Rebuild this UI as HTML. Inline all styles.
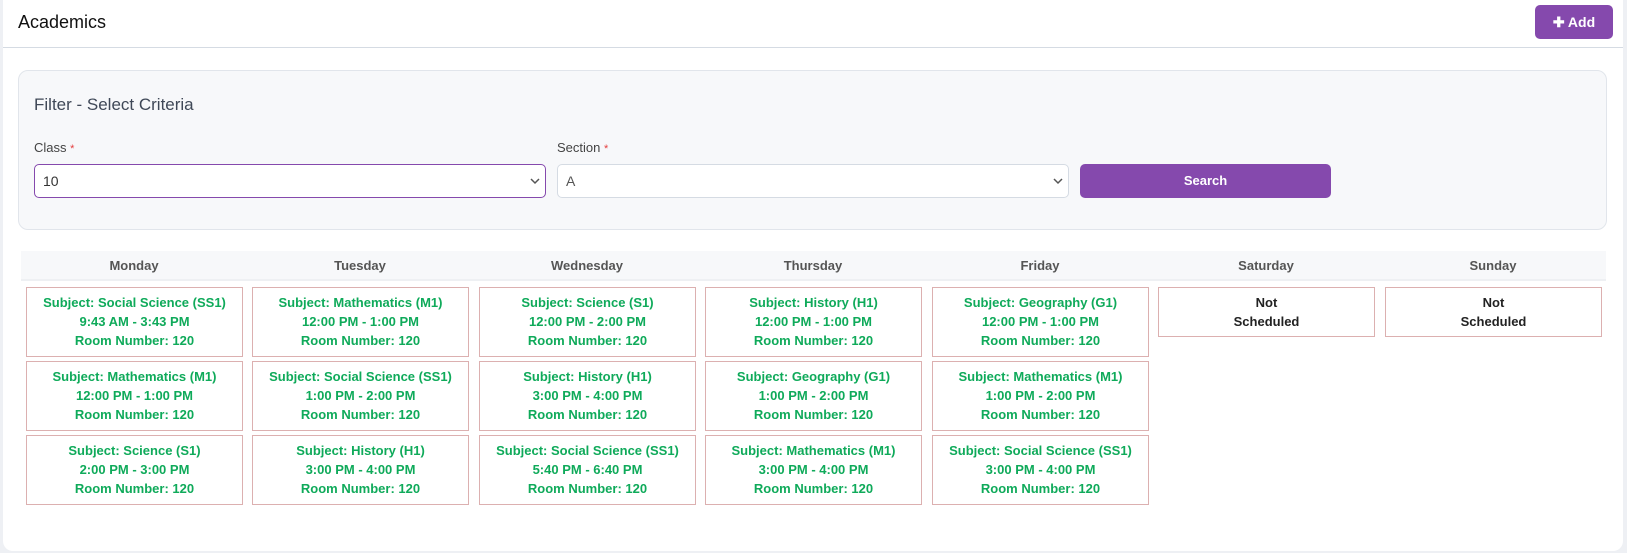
<!DOCTYPE html>
<html><head><meta charset="utf-8"><style>
*{box-sizing:border-box;margin:0;padding:0}
body{width:1627px;height:553px;background:#eef0f4;font-family:"Liberation Sans",sans-serif;position:relative;overflow:hidden}
.card{position:absolute;left:3px;top:0;width:1620px;height:551px;background:#fff;border-radius:0 0 10px 10px}
.hdr{position:absolute;left:0;top:0;width:1620px;height:48px;border-bottom:1px solid #d5dbe3}
.ttl{position:absolute;left:15px;top:12px;font-size:18px;color:#111}
.add{position:absolute;left:1532px;top:5px;width:78px;height:34px;background:#8549ad;border-radius:5px;color:#fff;font-size:14px;font-weight:bold;text-align:center;line-height:34px}
.flt{position:absolute;left:15px;top:70px;width:1589px;height:160px;background:#f7f8fa;border:1px solid #e1e5eb;border-radius:10px}
.ft{position:absolute;left:15px;top:24px;font-size:17px;color:#3f4857}
.lb{position:absolute;top:69px;font-size:13px;color:#444}
.lb b{color:#e53e3e;font-weight:normal;font-size:11px}
.sel{position:absolute;top:93px;height:34px;background:#fff;border:1px solid #d5dbe3;border-radius:5px;font-size:14px;color:#333;padding:8px 8px}
.sel svg{position:absolute;right:5px;top:13px}
.srch{position:absolute;left:1061px;top:93px;width:251px;height:34px;background:#8549ad;border-radius:5px;color:#fff;font-size:13px;font-weight:bold;text-align:center;line-height:34px}
.th{position:absolute;left:18px;top:251px;width:1585px;height:30px;background:#f7f8fa;border-bottom:2px solid #eef0f3}
.d{position:absolute;top:258px;width:226px;text-align:center;font-size:13px;font-weight:bold;color:#555}
.c{position:absolute;width:217px;height:70px;border:1px solid #dcb0b0;text-align:center;font-size:13px;font-weight:bold;line-height:19px;padding-top:5px;color:#0faa5a}
.ns{color:#222;height:50px}
</style></head><body>
<div class="card">
<div class="hdr"><div class="ttl">Academics</div><div class="add">✚ Add</div></div>
<div class="flt">
<div class="ft">Filter - Select Criteria</div>
<div class="lb" style="left:15px">Class <b>*</b></div>
<div class="lb" style="left:538px">Section <b>*</b></div>
<div class="sel" style="left:15px;width:512px;border-color:#8549ad">10<svg width="10" height="7" viewBox="0 0 10 7"><path d="M1 1l4 4 4-4" stroke="#555" stroke-width="1.5" fill="none"/></svg></div>
<div class="sel" style="left:538px;width:512px;color:#555">A<svg width="10" height="7" viewBox="0 0 10 7"><path d="M1 1l4 4 4-4" stroke="#555" stroke-width="1.5" fill="none"/></svg></div>
<div class="srch">Search</div>
</div>
<div class="th"></div>
<div class="d" style="left:18px">Monday</div>
<div class="d" style="left:244px">Tuesday</div>
<div class="d" style="left:471px">Wednesday</div>
<div class="d" style="left:697px">Thursday</div>
<div class="d" style="left:924px">Friday</div>
<div class="d" style="left:1150px">Saturday</div>
<div class="d" style="left:1377px">Sunday</div>

<div class="c" style="left:23px;top:287px">Subject: Social Science (SS1)<br>9:43 AM - 3:43 PM<br>Room Number: 120</div>
<div class="c" style="left:23px;top:361px">Subject: Mathematics (M1)<br>12:00 PM - 1:00 PM<br>Room Number: 120</div>
<div class="c" style="left:23px;top:435px">Subject: Science (S1)<br>2:00 PM - 3:00 PM<br>Room Number: 120</div>

<div class="c" style="left:249px;top:287px">Subject: Mathematics (M1)<br>12:00 PM - 1:00 PM<br>Room Number: 120</div>
<div class="c" style="left:249px;top:361px">Subject: Social Science (SS1)<br>1:00 PM - 2:00 PM<br>Room Number: 120</div>
<div class="c" style="left:249px;top:435px">Subject: History (H1)<br>3:00 PM - 4:00 PM<br>Room Number: 120</div>

<div class="c" style="left:476px;top:287px">Subject: Science (S1)<br>12:00 PM - 2:00 PM<br>Room Number: 120</div>
<div class="c" style="left:476px;top:361px">Subject: History (H1)<br>3:00 PM - 4:00 PM<br>Room Number: 120</div>
<div class="c" style="left:476px;top:435px">Subject: Social Science (SS1)<br>5:40 PM - 6:40 PM<br>Room Number: 120</div>

<div class="c" style="left:702px;top:287px">Subject: History (H1)<br>12:00 PM - 1:00 PM<br>Room Number: 120</div>
<div class="c" style="left:702px;top:361px">Subject: Geography (G1)<br>1:00 PM - 2:00 PM<br>Room Number: 120</div>
<div class="c" style="left:702px;top:435px">Subject: Mathematics (M1)<br>3:00 PM - 4:00 PM<br>Room Number: 120</div>

<div class="c" style="left:929px;top:287px">Subject: Geography (G1)<br>12:00 PM - 1:00 PM<br>Room Number: 120</div>
<div class="c" style="left:929px;top:361px">Subject: Mathematics (M1)<br>1:00 PM - 2:00 PM<br>Room Number: 120</div>
<div class="c" style="left:929px;top:435px">Subject: Social Science (SS1)<br>3:00 PM - 4:00 PM<br>Room Number: 120</div>

<div class="c ns" style="left:1155px;top:287px">Not<br>Scheduled</div>
<div class="c ns" style="left:1382px;top:287px">Not<br>Scheduled</div>
</div>
</body></html>
